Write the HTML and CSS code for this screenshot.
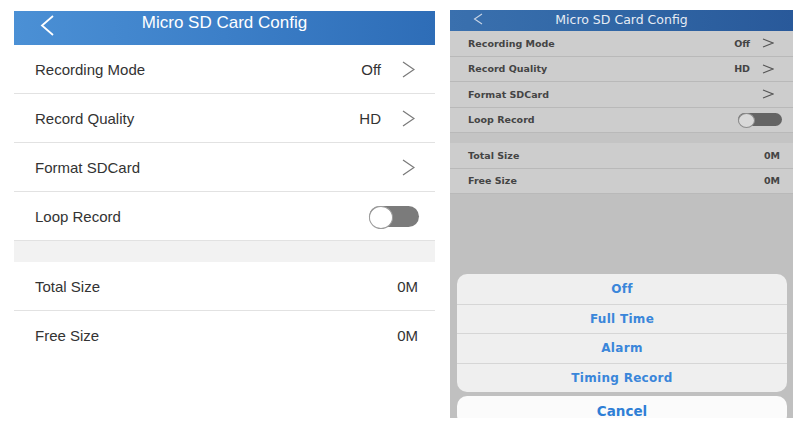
FILE: index.html
```html
<!DOCTYPE html>
<html lang="en">
<head>
<meta charset="utf-8">
<title>Micro SD Card Config</title>
<link rel="stylesheet" href="styles.css">
</head>
<body>
<div class="screens">
  <section class="phone">
    <header class="nav">
      <svg class="nav-back" width="14" height="21" viewBox="0 0 14 21"><path d="M13 1 L2 10.5 L13 20" fill="none" stroke="#fff" stroke-width="1.8"/></svg>
      <h1 class="nav-title">Micro SD Card Config</h1>
      <span></span>
    </header>
    <div class="group">
      <div class="row"><span class="label">Recording Mode</span><span class="value">Off</span><svg class="chev" width="13" height="17" viewBox="0 0 13 17"><path d="M1 1 L12 8.5 L1 16" fill="none" stroke="#7a7a7a" stroke-width="1.3"/></svg></div>
      <div class="row"><span class="label">Record Quality</span><span class="value">HD</span><svg class="chev" width="13" height="17" viewBox="0 0 13 17"><path d="M1 1 L12 8.5 L1 16" fill="none" stroke="#7a7a7a" stroke-width="1.3"/></svg></div>
      <div class="row"><span class="label">Format SDCard</span><svg class="chev" width="13" height="17" viewBox="0 0 13 17"><path d="M1 1 L12 8.5 L1 16" fill="none" stroke="#7a7a7a" stroke-width="1.3"/></svg></div>
      <div class="row"><span class="label">Loop Record</span><span class="toggle"></span></div>
    </div>
    <div class="band"></div>
    <div class="group">
      <div class="row"><span class="label">Total Size</span><span class="value">0M</span></div>
      <div class="row row--last"><span class="label">Free Size</span><span class="value">0M</span></div>
    </div>
  </section>

  <section class="phone phone--dim">
    <header class="nav nav--dim">
      <svg class="nav-back" width="10" height="12" viewBox="0 0 10 12"><path d="M9 1 L1.5 6 L9 11" fill="none" stroke="#c9d5e6" stroke-width="1.1"/></svg>
      <h1 class="nav-title">Micro SD Card Config</h1>
      <span></span>
    </header>
    <div class="group">
      <div class="row"><span class="label">Recording Mode</span><span class="value">Off</span><svg class="chev" width="12" height="10" viewBox="0 0 12 10"><path d="M1 1 L11 5 L1 9" fill="none" stroke="#555" stroke-width="1.1"/></svg></div>
      <div class="row"><span class="label">Record Quality</span><span class="value">HD</span><svg class="chev" width="12" height="10" viewBox="0 0 12 10"><path d="M1 1 L11 5 L1 9" fill="none" stroke="#555" stroke-width="1.1"/></svg></div>
      <div class="row"><span class="label">Format SDCard</span><svg class="chev" width="12" height="10" viewBox="0 0 12 10"><path d="M1 1 L11 5 L1 9" fill="none" stroke="#555" stroke-width="1.1"/></svg></div>
      <div class="row"><span class="label">Loop Record</span><span class="toggle"></span></div>
    </div>
    <div class="band"></div>
    <div class="group">
      <div class="row"><span class="label">Total Size</span><span class="value">0M</span></div>
      <div class="row"><span class="label">Free Size</span><span class="value">0M</span></div>
    </div>
    <div class="sheet">
      <div class="sheet-options">
        <div class="sheet-option">Off</div>
        <div class="sheet-option">Full Time</div>
        <div class="sheet-option">Alarm</div>
        <div class="sheet-option">Timing Record</div>
      </div>
      <div class="sheet-cancel">Cancel</div>
    </div>
  </section>
</div>
</body>
</html>
```
FILE: styles.css
```css
* { box-sizing: border-box; }

body {
  margin: 0;
  background: #fff;
  font-family: "Liberation Sans", Arial, sans-serif;
  color: #333;
}

.screens {
  display: flex;
  align-items: flex-start;
  gap: 15px;
  padding-left: 14px;
}

.phone {
  width: 421px;
  margin-top: 11px;
  background: #fff;
}

/* nav bar */
.nav {
  height: 34px;
  display: grid;
  grid-template-columns: 1fr auto 1fr;
  align-items: start;
  background: linear-gradient(90deg, #4b90d5 0%, #3c7fc8 50%, #2e6db7 100%);
}
.nav-back {
  display: block;
  margin: 4px 0 0 26px;
}
.nav-title {
  margin: 0;
  font-size: 17px;
  font-weight: normal;
  line-height: 24px;
  color: #fff;
  white-space: nowrap;
}

/* rows */
.row {
  height: 49px;
  display: flex;
  align-items: center;
  padding: 0 17px 0 21px;
  border-bottom: 1px solid #e2e2e2;
  font-size: 15px;
}
.row--last { border-bottom: 0; }
.label { flex: 1; }
.value { color: #333; }
.chev { display: block; margin: 0 3px 0 21px; }

.band {
  height: 21px;
  background: #f2f2f2;
}

.toggle {
  position: relative;
  width: 50px;
  height: 21px;
  border-radius: 11px;
  background: #7b7b7b;
  margin-right: -1px;
}
.toggle::before {
  content: "";
  position: absolute;
  left: 0;
  top: 0;
  width: 22px;
  height: 21px;
  border-radius: 50%;
  background: #fff;
  border: 1px solid #9c9c9c;
}

/* dimmed screen with action sheet */
.phone--dim {
  width: 343px;
  height: 408px;
  margin-top: 10px;
  overflow: hidden;
  background: #c0c0c0;
  font-family: "DejaVu Sans", sans-serif;
}
.nav--dim {
  height: 21px;
  background: linear-gradient(90deg, #3a70ae 0%, #3066a5 50%, #29599a 100%);
}
.nav--dim .nav-back { margin: 3px 0 0 23px; }
.nav--dim .nav-title {
  font-size: 12.5px;
  line-height: 19px;
  color: #e6ecf4;
}
.phone--dim .group { background: #cdcdcd; }
.phone--dim .row {
  height: 25.5px;
  padding: 0 13px 0 18px;
  border-bottom: 1px solid #b9b9b9;
  font-size: 9.5px;
  font-weight: bold;
  color: #444;
}
.phone--dim .value { color: #444; }
.phone--dim .chev { margin: 0 6px 0 12px; }
.phone--dim .band {
  height: 10px;
  background: #c4c4c4;
}
.phone--dim .toggle {
  width: 44px;
  height: 13px;
  border-radius: 7px;
  background: #646464;
  margin-right: -2px;
}
.phone--dim .toggle::before {
  width: 15px;
  height: 13px;
  background: #d9d9d9;
  border: 1px solid #8d8d8d;
}

.sheet {
  margin: 80px 6px 0 7px;
}
.sheet-options {
  background: #efefef;
  border-radius: 10px;
  overflow: hidden;
}
.sheet-option {
  height: 29.5px;
  display: flex;
  align-items: center;
  justify-content: center;
  border-top: 1px solid #d6d6d6;
  font-size: 12px;
  font-weight: bold;
  letter-spacing: 0.3px;
  color: #3a86da;
}
.sheet-option:first-child { border-top: 0; }
.sheet-cancel {
  margin-top: 4px;
  height: 29px;
  display: flex;
  align-items: center;
  justify-content: center;
  background: #fbfbfb;
  border-radius: 10px;
  font-size: 13.5px;
  font-weight: bold;
  color: #2f7fd6;
}
```
